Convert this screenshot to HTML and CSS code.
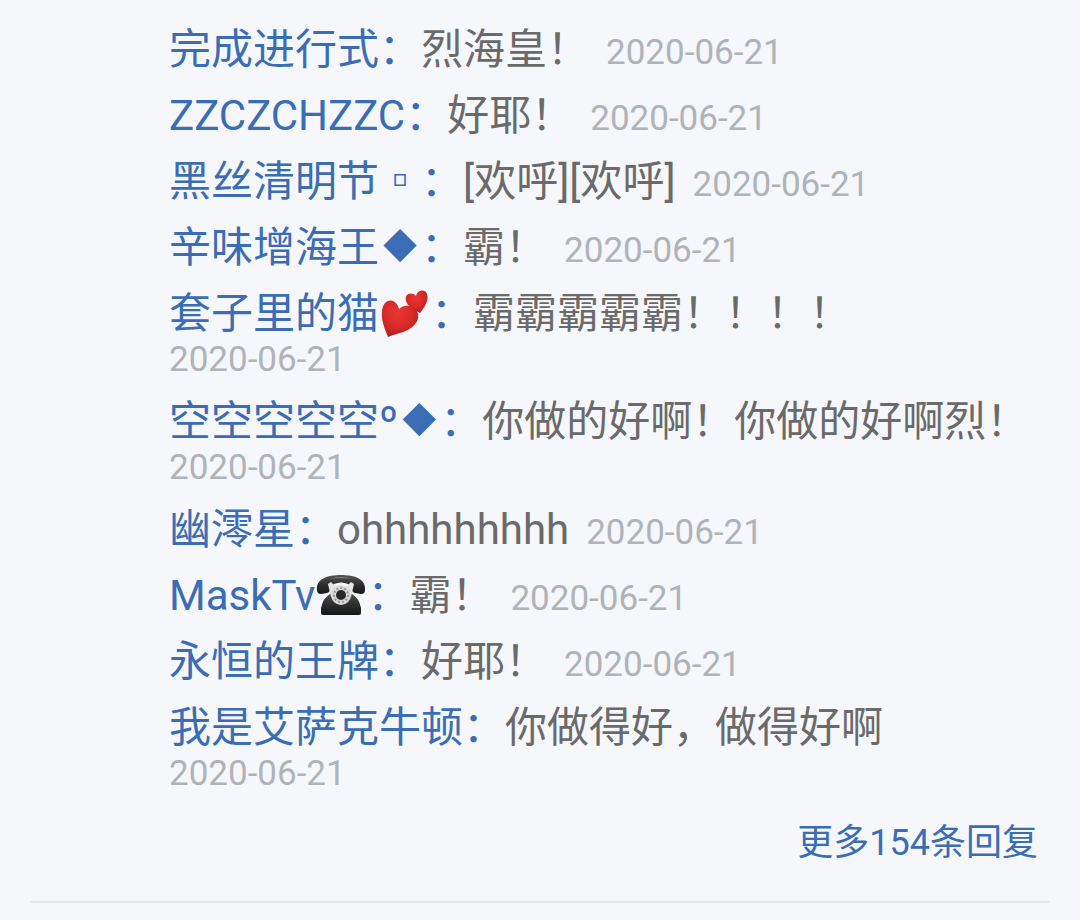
FILE: index.html
```html
<!DOCTYPE html>
<html lang="zh-CN">
<head>
<meta charset="utf-8">
<meta name="viewport" content="width=device-width, initial-scale=1">
<title>回复</title>
<link rel="stylesheet" href="styles.css">
</head>
<body>
<main class="thread">
  <ul class="replies">
    <li class="reply"><p class="message"><a class="name" href="#">完成进行式：</a>烈海皇！</p><time class="date" datetime="2020-06-21">2020-06-21</time></li>
    <li class="reply"><p class="message"><a class="name" href="#">ZZCZCHZZC：</a>好耶！</p><time class="date" datetime="2020-06-21">2020-06-21</time></li>
    <li class="reply"><p class="message"><a class="name" href="#">黑丝清明节<span class="symbol">▫</span>：</a>[欢呼][欢呼]</p><time class="date" datetime="2020-06-21">2020-06-21</time></li>
    <li class="reply"><p class="message"><a class="name" href="#">辛味增海王<span class="symbol diamond">◆</span>：</a>霸！</p><time class="date" datetime="2020-06-21">2020-06-21</time></li>
    <li class="reply"><p class="message"><a class="name" href="#">套子里的猫<svg class="emoji" viewBox="0 0 52 50" role="img" aria-label="两颗心">
      <defs>
        <radialGradient id="heart" cx="45%" cy="35%" r="65%"><stop offset="0" stop-color="#ea3733"/><stop offset=".6" stop-color="#d82929"/><stop offset="1" stop-color="#b01f24"/></radialGradient>
      </defs>
      <path fill="url(#heart)" d="M9 49C6 41 2 33 3 23C4 11 15 9 19 18L20 21C25 16 34 17 38 23C42 31 36 38 29 42C23 45 16 46 9 49Z"/>
      <path fill="url(#heart)" d="M41 25C35 22 29 19 27 13C25 6 32 3 37 8C38 2 46 0 48 6C50 12 46 19 41 25Z"/>
    </svg>：</a>霸霸霸霸霸！！！！</p><time class="date" datetime="2020-06-21">2020-06-21</time></li>
    <li class="reply"><p class="message"><a class="name" href="#">空空空空空º<span class="symbol diamond">◆</span>：</a>你做的好啊！你做的好啊烈！</p><time class="date" datetime="2020-06-21">2020-06-21</time></li>
    <li class="reply"><p class="message"><a class="name" href="#">幽澪星：</a>ohhhhhhhhh</p><time class="date" datetime="2020-06-21">2020-06-21</time></li>
    <li class="reply"><p class="message"><a class="name" href="#">MaskTv<svg class="emoji" viewBox="0 0 52 50" role="img" aria-label="电话">
      <defs>
        <linearGradient id="phone" x1="0" y1="0" x2="0" y2="1"><stop offset="0" stop-color="#555"/><stop offset=".5" stop-color="#303030"/><stop offset="1" stop-color="#171717"/></linearGradient>
      </defs>
      <path fill="url(#phone)" d="M6 43V38Q8 28 15 24L18 22H34L37 24Q44 28 46 38V43Q46 45 44 45H8Q6 45 6 43Z"/>
      <path fill="url(#phone)" d="M2 20C1 9 12 5 26 5S51 9 50 20Q50 24 46 24L40 23Q36 22 37 17L33 14Q26 11 19 14L15 17Q16 22 12 23L6 24Q2 24 2 20Z"/>
      <path fill="#888" d="M15 9Q26 5 37 9Q26 7 15 9Z"/>
      <path fill="#e5e5e5" d="M13 14L16 12L21 17H31L36 12L39 14L36 27H16Z"/>
      <circle cx="26" cy="25" r="10" fill="#d8d8d8"/>
      <circle cx="26" cy="25" r="7" fill="none" stroke="#999" stroke-width="2" stroke-dasharray="2 2"/>
      <circle cx="26" cy="25" r="5" fill="#292929"/>
    </svg>：</a>霸！</p><time class="date" datetime="2020-06-21">2020-06-21</time></li>
    <li class="reply"><p class="message"><a class="name" href="#">永恒的王牌：</a>好耶！</p><time class="date" datetime="2020-06-21">2020-06-21</time></li>
    <li class="reply"><p class="message"><a class="name" href="#">我是艾萨克牛顿：</a>你做得好，做得好啊</p><time class="date" datetime="2020-06-21">2020-06-21</time></li>
  </ul>
  <a class="more" href="#">更多154条回复</a>
</main>
<hr class="divider">
</body>
</html>
```
FILE: styles.css
```css
* {
  box-sizing: border-box;
}

body {
  margin: 0;
  background: #f5f7fb;
  color: #6a6a6a;
  font-family: Roboto, "Noto Sans CJK SC", sans-serif;
  font-size: 42px;
  line-height: 46px;
  text-spacing-trim: space-all;
}

.thread {
  display: flex;
  flex-direction: column;
  padding: 27px 42px 35px 169px;
}

.replies {
  display: flex;
  flex-direction: column;
  gap: 20px;
  margin: 0;
  padding: 0;
  list-style: none;
}

.reply {
  display: flex;
  flex-wrap: wrap;
  align-items: baseline;
  gap: 4px 17px;
}

.message {
  margin: 0;
}

.name,
.more {
  color: #3a6db5;
  text-decoration: none;
}

.symbol {
  display: inline-block;
  width: 42px;
  text-align: center;
  font-family: "Noto Sans CJK SC", sans-serif;
  line-height: 20px;
}

.diamond {
  font-size: 34px;
  vertical-align: 3px;
}

.emoji {
  width: 52px;
  height: 50px;
  margin: -10px 0;
  vertical-align: 0;
}

.date {
  color: #b0b3b8;
  font-size: 35px;
  line-height: 38px;
}

.more {
  align-self: flex-end;
  margin-top: 27px;
  font-size: 36px;
}

.divider {
  height: 2px;
  margin: 0 30px;
  border: 0;
  background: #e5e7eb;
}
```
